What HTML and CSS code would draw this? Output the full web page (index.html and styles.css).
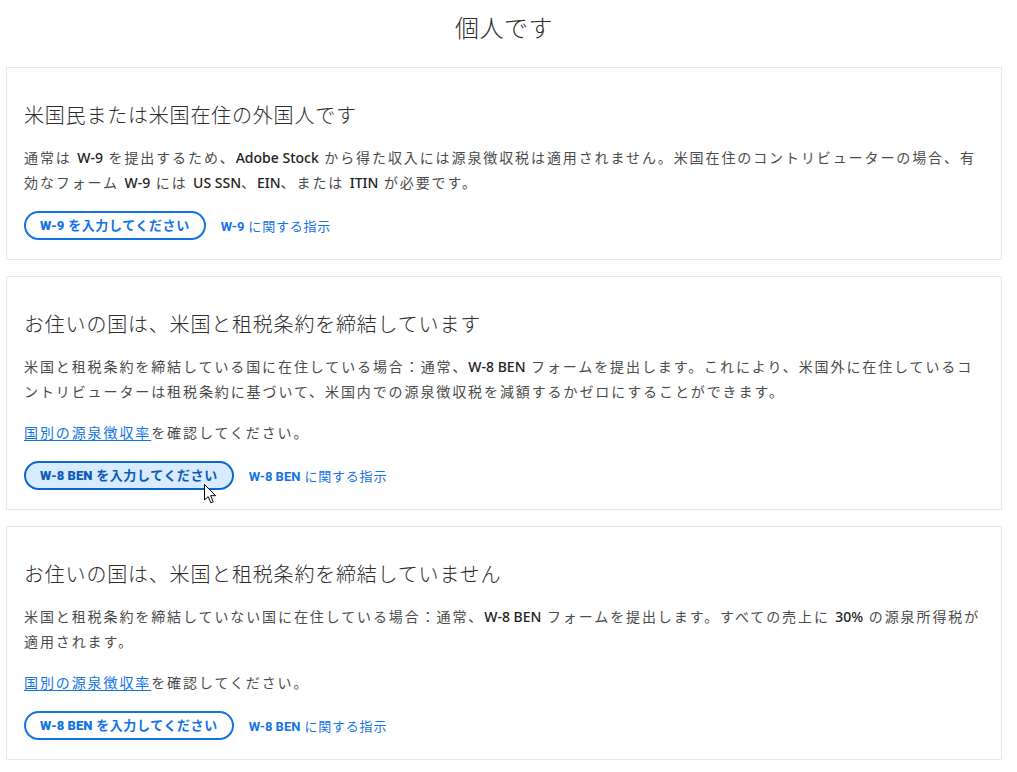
FILE: index.html
```html
<!DOCTYPE html>
<html lang="ja">
<head>
<meta charset="utf-8">
<title>個人です</title>
<link rel="stylesheet" href="styles.css">
</head>
<body>
<div class="page">
  <h1 class="title">個人です</h1>

  <section class="card">
    <h2 class="card-title">米国民または米国在住の外国人です</h2>
    <p class="text">通常は <strong>W-9</strong> を提出するため、<strong>Adobe Stock</strong> から得た収入には源泉徴収税は適用されません。米国在住のコントリビューターの場合、有効なフォーム <strong>W-9</strong> には <strong>US SSN</strong>、<strong>EIN</strong>、または <strong>ITIN</strong> が必要です。</p>
    <div class="actions">
      <a class="btn" href="#"><b>W-9</b> を入力してください</a>
      <a class="help" href="#"><b>W-9</b> に関する指示</a>
    </div>
  </section>

  <section class="card">
    <h2 class="card-title">お住いの国は、米国と租税条約を締結しています</h2>
    <p class="text">米国と租税条約を締結している国に在住している場合：通常、<strong>W-8 BEN</strong> フォームを提出します。これにより、米国外に在住しているコントリビューターは租税条約に基づいて、米国内での源泉徴収税を減額するかゼロにすることができます。</p>
    <p class="text"><a class="rate" href="#">国別の源泉徴収率</a>を確認してください。</p>
    <div class="actions">
      <a class="btn hover" href="#"><b>W-8 BEN</b> を入力してください<svg class="cursor" width="13" height="20" viewBox="0 0 13 20"><path d="M0.5 0.5 L0.5 16 L4.2 12.6 L6.8 18.8 L9.2 17.8 L6.6 11.7 L11.6 11.7 Z" fill="#fff" stroke="#000" stroke-width="1" stroke-linejoin="round"/></svg></a>
      <a class="help" href="#"><b>W-8 BEN</b> に関する指示</a>
    </div>
  </section>

  <section class="card">
    <h2 class="card-title">お住いの国は、米国と租税条約を締結していません</h2>
    <p class="text">米国と租税条約を締結していない国に在住している場合：通常、<strong>W-8 BEN</strong> フォームを提出します。すべての売上に <strong>30%</strong> の源泉所得税が適用されます。</p>
    <p class="text"><a class="rate" href="#">国別の源泉徴収率</a>を確認してください。</p>
    <div class="actions">
      <a class="btn" href="#"><b>W-8 BEN</b> を入力してください</a>
      <a class="help" href="#"><b>W-8 BEN</b> に関する指示</a>
    </div>
  </section>
</div>
</body>
</html>
```

FILE: styles.css
```css
html, body {
  margin: 0;
  padding: 0;
  background: #ffffff;
}

body {
  font-family: "Noto Sans", "Noto Sans CJK JP", sans-serif;
  color: #4b4b4b;
}

.page {
  padding: 12px 15px 0 6px;
  display: flex;
  flex-direction: column;
  gap: 16px;
}

.title {
  margin: 0 0 8px;
  text-align: center;
  font-size: 24px;
  line-height: 31px;
  font-weight: 300;
  color: #2c2c2c;
  letter-spacing: 0.5px;
}

.card {
  border: 1px solid #e8e8e8;
  padding: 35px 17px 19px 17px;
}

.card-title {
  margin: 0 0 16px;
  font-size: 20px;
  line-height: 26px;
  font-weight: 300;
  color: #2c2c2c;
  letter-spacing: 0.8px;
}

.text {
  margin: 0 0 16px;
  font-size: 14px;
  line-height: 25px;
  letter-spacing: 1.9px;
  color: #4b4b4b;
}

.text strong {
  font-weight: 500;
  letter-spacing: 0;
  color: #222222;
}

.rate {
  color: #1473e6;
  text-decoration: underline;
  text-underline-offset: 2px;
}

.actions {
  display: flex;
  align-items: center;
  gap: 15px;
}

.btn {
  position: relative;
  display: inline-block;
  border: 2px solid #1473e6;
  border-radius: 15px;
  padding: 0 14px;
  height: 25px;
  line-height: 25px;
  font-family: Roboto, "Noto Sans CJK JP", sans-serif;
  font-size: 13px;
  font-weight: 700;
  letter-spacing: 0.6px;
  color: #1473e6;
  text-decoration: none;
  background: #ffffff;
}

.btn b {
  letter-spacing: 0;
}

.btn.hover {
  background: #d8ebff;
  border-color: #0d66d0;
  color: #0d5bb8;
}

.cursor {
  position: absolute;
  left: 178px;
  top: 21px;
}

.help {
  font-family: Roboto, "Noto Sans CJK JP", sans-serif;
  font-size: 13px;
  letter-spacing: 0.8px;
  color: #1473e6;
  text-decoration: none;
}

.help b {
  font-weight: 700;
  letter-spacing: 0;
}
```
